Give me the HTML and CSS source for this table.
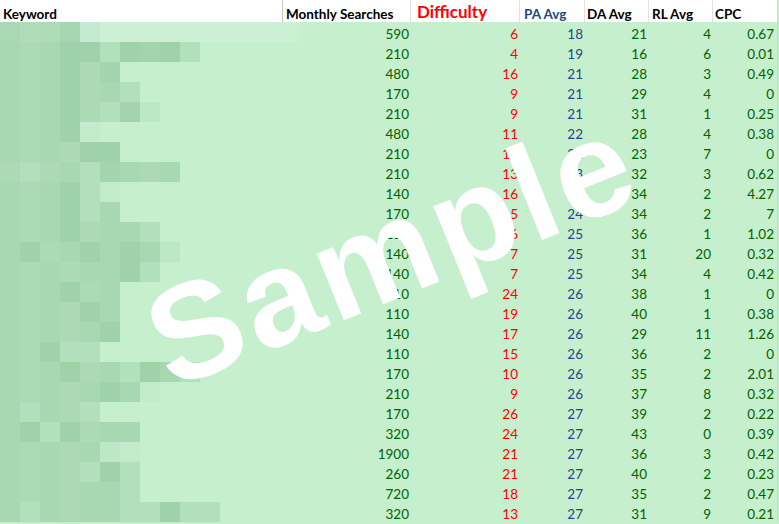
FILE: index.html
```html
<!DOCTYPE html>
<html>
<head>
<meta charset="utf-8">
<link rel="stylesheet" href="styles.css">
</head>
<body>
<div class="page">
  <div class="sheet">
    <div class="h h-kw">Keyword</div>
    <div class="h h-ms">Monthly Searches</div>
    <div class="h h-df">Difficulty</div>
    <div class="h h-pa">PA Avg</div>
    <div class="h h-da">DA Avg</div>
    <div class="h h-rl">RL Avg</div>
    <div class="h h-cpc">CPC</div>

    <div class="kw"><div class="mosaic"><i class="a1"></i><i class="a2"></i><i class="a3"></i><i class="a4"></i><i class="a5"></i><i class="strip"></i></div></div>
    <div class="c ms">590</div><div class="c df">6</div><div class="c pa">18</div><div class="c da">21</div><div class="c rl">4</div><div class="c cpc">0.67</div>

    <div class="kw"><div class="mosaic"><i class="m"></i><i class="n"></i><i class="m"></i><i class="d"></i><i class="d"></i><i class="l"></i><i class="d"></i><i class="e"></i><i class="d"></i><i class="l"></i></div></div>
    <div class="c ms">210</div><div class="c df">4</div><div class="c pa">19</div><div class="c da">16</div><div class="c rl">6</div><div class="c cpc">0.01</div>

    <div class="kw"><div class="mosaic"><i class="m"></i><i class="n"></i><i class="m"></i><i class="d"></i><i class="n"></i><i class="e"></i></div></div>
    <div class="c ms">480</div><div class="c df">16</div><div class="c pa">21</div><div class="c da">28</div><div class="c rl">3</div><div class="c cpc">0.49</div>

    <div class="kw"><div class="mosaic"><i class="m"></i><i class="n"></i><i class="m"></i><i class="d"></i><i class="n"></i><i class="m"></i><i class="l"></i></div></div>
    <div class="c ms">170</div><div class="c df">9</div><div class="c pa">21</div><div class="c da">29</div><div class="c rl">4</div><div class="c cpc">0</div>

    <div class="kw"><div class="mosaic"><i class="m"></i><i class="n"></i><i class="m"></i><i class="d"></i><i class="n"></i><i class="l"></i><i class="e"></i><i class="v"></i></div></div>
    <div class="c ms">210</div><div class="c df">9</div><div class="c pa">21</div><div class="c da">31</div><div class="c rl">1</div><div class="c cpc">0.25</div>

    <div class="kw"><div class="mosaic"><i class="m"></i><i class="n"></i><i class="m"></i><i class="d"></i><i class="w"></i></div></div>
    <div class="c ms">480</div><div class="c df">11</div><div class="c pa">22</div><div class="c da">28</div><div class="c rl">4</div><div class="c cpc">0.38</div>

    <div class="kw"><div class="mosaic"><i class="m"></i><i class="n"></i><i class="m"></i><i class="n"></i><i class="d"></i><i class="d"></i></div></div>
    <div class="c ms">210</div><div class="c df">10</div><div class="c pa">22</div><div class="c da">23</div><div class="c rl">7</div><div class="c cpc">0</div>

    <div class="kw"><div class="mosaic"><i class="n"></i><i class="l"></i><i class="n"></i><i class="m"></i><i class="l"></i><i class="e"></i><i class="m"></i><i class="n"></i><i class="m"></i></div></div>
    <div class="c ms">210</div><div class="c df">13</div><div class="c pa">23</div><div class="c da">32</div><div class="c rl">3</div><div class="c cpc">0.62</div>

    <div class="kw"><div class="mosaic"><i class="m"></i><i class="n"></i><i class="m"></i><i class="d"></i><i class="l"></i><i class="w"></i></div></div>
    <div class="c ms">140</div><div class="c df">16</div><div class="c pa">24</div><div class="c da">34</div><div class="c rl">2</div><div class="c cpc">4.27</div>

    <div class="kw"><div class="mosaic"><i class="m"></i><i class="n"></i><i class="m"></i><i class="d"></i><i class="l"></i><i class="m"></i></div></div>
    <div class="c ms">170</div><div class="c df">15</div><div class="c pa">24</div><div class="c da">34</div><div class="c rl">2</div><div class="c cpc">7</div>

    <div class="kw"><div class="mosaic"><i class="m"></i><i class="n"></i><i class="m"></i><i class="d"></i><i class="n"></i><i class="m"></i><i class="m"></i><i class="l"></i></div></div>
    <div class="c ms">110</div><div class="c df">16</div><div class="c pa">25</div><div class="c da">36</div><div class="c rl">1</div><div class="c cpc">1.02</div>

    <div class="kw"><div class="mosaic"><i class="m"></i><i class="d"></i><i class="n"></i><i class="m"></i><i class="d"></i><i class="m"></i><i class="d"></i><i class="m"></i><i class="v"></i></div></div>
    <div class="c ms">140</div><div class="c df">7</div><div class="c pa">25</div><div class="c da">31</div><div class="c rl">20</div><div class="c cpc">0.32</div>

    <div class="kw"><div class="mosaic"><i class="m"></i><i class="n"></i><i class="m"></i><i class="n"></i><i class="m"></i><i class="m"></i><i class="d"></i><i class="l"></i></div></div>
    <div class="c ms">140</div><div class="c df">7</div><div class="c pa">25</div><div class="c da">34</div><div class="c rl">4</div><div class="c cpc">0.42</div>

    <div class="kw"><div class="mosaic"><i class="m"></i><i class="n"></i><i class="m"></i><i class="d"></i><i class="n"></i><i class="m"></i></div></div>
    <div class="c ms">110</div><div class="c df">24</div><div class="c pa">26</div><div class="c da">38</div><div class="c rl">1</div><div class="c cpc">0</div>

    <div class="kw"><div class="mosaic"><i class="m"></i><i class="n"></i><i class="m"></i><i class="n"></i><i class="d"></i><i class="m"></i></div></div>
    <div class="c ms">110</div><div class="c df">19</div><div class="c pa">26</div><div class="c da">40</div><div class="c rl">1</div><div class="c cpc">0.38</div>

    <div class="kw"><div class="mosaic"><i class="m"></i><i class="n"></i><i class="m"></i><i class="n"></i><i class="m"></i><i class="d"></i></div></div>
    <div class="c ms">140</div><div class="c df">17</div><div class="c pa">26</div><div class="c da">29</div><div class="c rl">11</div><div class="c cpc">1.26</div>

    <div class="kw"><div class="mosaic"><i class="m"></i><i class="n"></i><i class="d"></i><i class="l"></i><i class="l"></i></div></div>
    <div class="c ms">110</div><div class="c df">15</div><div class="c pa">26</div><div class="c da">36</div><div class="c rl">2</div><div class="c cpc">0</div>

    <div class="kw"><div class="mosaic"><i class="m"></i><i class="n"></i><i class="m"></i><i class="d"></i><i class="n"></i><i class="m"></i><i class="l"></i><i class="d"></i><i class="m"></i><i class="l"></i></div></div>
    <div class="c ms">170</div><div class="c df">10</div><div class="c pa">26</div><div class="c da">35</div><div class="c rl">2</div><div class="c cpc">2.01</div>

    <div class="kw"><div class="mosaic"><i class="m"></i><i class="n"></i><i class="m"></i><i class="n"></i><i class="m"></i><i class="d"></i><i class="m"></i><i class="w"></i></div></div>
    <div class="c ms">210</div><div class="c df">9</div><div class="c pa">26</div><div class="c da">37</div><div class="c rl">8</div><div class="c cpc">0.32</div>

    <div class="kw"><div class="mosaic"><i class="m"></i><i class="l"></i><i class="m"></i><i class="n"></i><i class="l"></i></div></div>
    <div class="c ms">170</div><div class="c df">26</div><div class="c pa">27</div><div class="c da">39</div><div class="c rl">2</div><div class="c cpc">0.22</div>

    <div class="kw"><div class="mosaic"><i class="m"></i><i class="d"></i><i class="l"></i><i class="d"></i><i class="n"></i><i class="m"></i><i class="m"></i></div></div>
    <div class="c ms">320</div><div class="c df">24</div><div class="c pa">27</div><div class="c da">43</div><div class="c rl">0</div><div class="c cpc">0.39</div>

    <div class="kw"><div class="mosaic"><i class="m"></i><i class="n"></i><i class="m"></i><i class="n"></i><i class="m"></i><i class="v"></i><i class="w"></i></div></div>
    <div class="c ms">1900</div><div class="c df">21</div><div class="c pa">27</div><div class="c da">36</div><div class="c rl">3</div><div class="c cpc">0.42</div>

    <div class="kw"><div class="mosaic"><i class="m"></i><i class="n"></i><i class="m"></i><i class="n"></i><i class="l"></i><i class="d"></i><i class="l"></i></div></div>
    <div class="c ms">260</div><div class="c df">21</div><div class="c pa">27</div><div class="c da">40</div><div class="c rl">2</div><div class="c cpc">0.23</div>

    <div class="kw"><div class="mosaic"><i class="m"></i><i class="n"></i><i class="m"></i><i class="n"></i><i class="m"></i><i class="m"></i><i class="l"></i></div></div>
    <div class="c ms">720</div><div class="c df">18</div><div class="c pa">27</div><div class="c da">35</div><div class="c rl">2</div><div class="c cpc">0.47</div>

    <div class="kw"><div class="mosaic"><i class="m"></i><i class="l"></i><i class="m"></i><i class="n"></i><i class="m"></i><i class="m"></i><i class="l"></i><i class="l"></i><i class="d"></i><i class="l"></i><i class="l"></i></div></div>
    <div class="c ms">320</div><div class="c df">13</div><div class="c pa">27</div><div class="c da">31</div><div class="c rl">9</div><div class="c cpc">0.21</div>
  </div>
  <div class="watermark">Sample</div>
</div>
</body>
</html>
```
FILE: styles.css
```css
html, body {
  margin: 0;
  padding: 0;
  background: #c6efce;
}

.page {
  position: relative;
  width: 779px;
  height: 524px;
  overflow: hidden;
  background: #c6efce;
}

.sheet {
  display: grid;
  grid-template-columns: 283px 128px 109px 65px 64px 64px 64px;
  grid-template-rows: 22px;
  grid-auto-rows: 20px;
  width: 777px;
  border-right: 1px solid #d4d4d4;
  font-family: Lato, "Liberation Sans", sans-serif;
}

.h {
  background: #ffffff;
  box-sizing: border-box;
  border-right: 1px solid #e1e1e1;
  font-weight: 700;
  font-size: 13.5px;
  line-height: 16px;
  padding-top: 6px;
  color: #000000;
  white-space: nowrap;
}

.h-kw { padding-left: 3px; border-right-color: #c8c8c8; }
.h-ms { padding-left: 3px; }
.h-df { padding-left: 6px; color: #ff0000; font-size: 17px; padding-top: 4px; }
.h-pa { padding-left: 4px; color: #1f497d; }
.h-da { padding-left: 2px; }
.h-rl { padding-left: 3px; }
.h-cpc { padding-left: 2px; border-right: none; }

.kw {
  position: relative;
  overflow: visible;
}

.mosaic {
  display: flex;
  height: 20px;
}

.mosaic i {
  display: block;
  width: 20px;
  height: 20px;
  flex: none;
}

.mosaic .d { background: #a0d2aa; }
.mosaic .e { background: #a3d4ad; }
.mosaic .m { background: #a8d8b2; }
.mosaic .n { background: #abdab5; }
.mosaic .l { background: #b2e0bd; }
.mosaic .v { background: #bde8c8; }
.mosaic .w { background: #c2ebcc; }

.mosaic .a1 { background: #a9d8b3; }
.mosaic .a2 { background: #b0ddb9; }
.mosaic .a3 { background: #acdbb5; }
.mosaic .a4 { background: #a6d6b0; }
.mosaic .a5 { background: #c4ebcf; }
.mosaic .strip { width: 200px; background: #cbf0d4; }

.c {
  font-size: 13.5px;
  line-height: 16px;
  padding-top: 4px;
  padding-right: 2px;
  text-align: right;
  color: #006100;
  position: relative;
}

.c.cpc { padding-right: 3px; }
.df { color: #ff0000; }
.pa { color: #1f497d; }

.watermark {
  position: absolute;
  left: 392px;
  top: 250px;
  transform: translate(-50%, -50%) rotate(-22deg);
  font-family: "Liberation Sans", Arial, sans-serif;
  font-weight: 700;
  font-size: 136px;
  letter-spacing: 5px;
  line-height: 1;
  color: #ffffff;
  white-space: nowrap;
}
```
